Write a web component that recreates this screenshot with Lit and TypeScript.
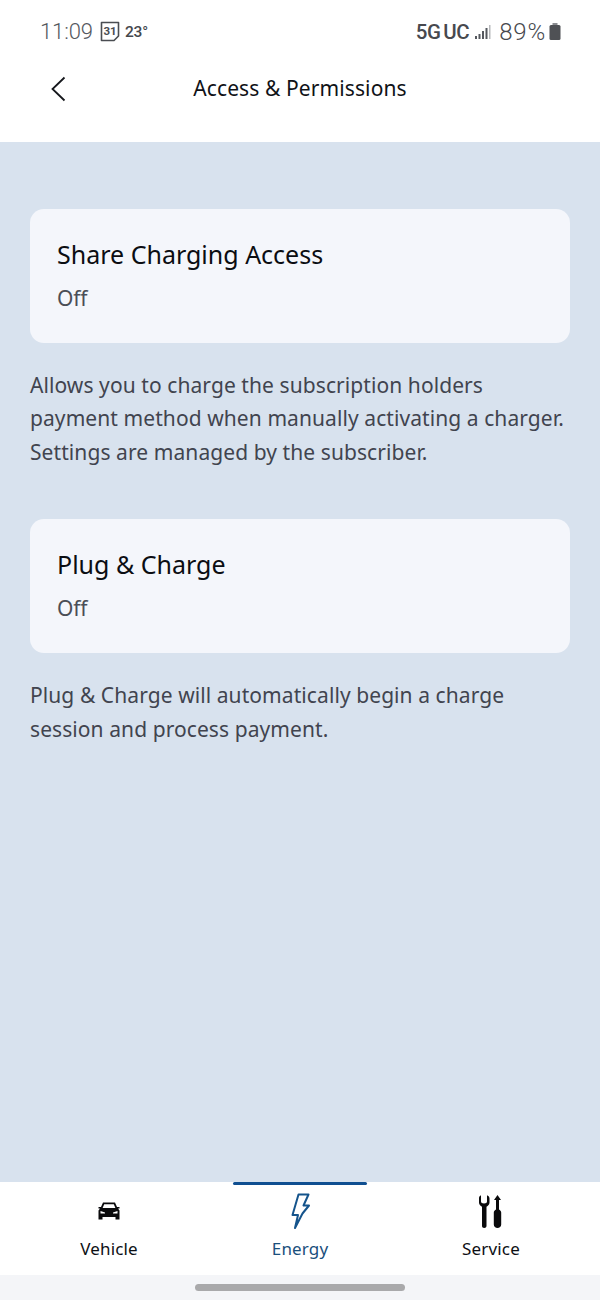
import { LitElement, html, css } from "lit";
import { customElement } from "lit/decorators.js";

@customElement("app-root")
export class AppRoot extends LitElement {
  static styles = css`
    :host { display: flex; flex-direction: column; width: 600px; height: 1300px; overflow: hidden; background: #d8e2ee; font-family: "Noto Sans", sans-serif; color: #00095b; }
    .top { height: 142px; background: #fff; display: flex; flex-direction: column; flex: none; }
    .status { height: 62px; display: flex; align-items: center; justify-content: space-between; padding: 1px 39px 0 40px; color: #50535a; box-sizing: border-box; }
    .status-left, .status-right { display: flex; align-items: center; }
    .time { font: 300 22px/26px "Roboto", sans-serif; letter-spacing: -.1px; color: #55585e; }
    .cal { margin-left: 7px; display: block; }
    .temp { margin-left: 5px; font: 500 15.5px/20px "Roboto", sans-serif; letter-spacing: -.2px; color: #44474c; }
    .net { font: 500 20.5px/24px "Roboto", sans-serif; color: #47494e; letter-spacing: -.4px; word-spacing: -2px; }
    .sig { margin-left: 6px; display: block; }
    .pct { margin-left: 8px; font: 300 24px/28px "Roboto", sans-serif; color: #47494e; letter-spacing: .8px; }
    .bat { margin-left: 3px; display: block; }
    .bar { height: 54px; position: relative; display: flex; align-items: center; justify-content: center; }
    .back { position: absolute; left: 50px; top: 14px; }
    .title { font-size: 21px; line-height: 28px; color: #101217; letter-spacing: .1px; margin-top: -3px; }
    .content { flex: 1; padding: 67px 30px 0; display: flex; flex-direction: column; }
    .card { height: 134px; box-sizing: border-box; background: #f4f6fb; border-radius: 14px; padding: 27px 27px 0; display: flex; flex-direction: column; gap: 12px; }
    .name { font-size: 25px; line-height: 36px; color: #0b0d12; }
    .state { font-size: 21px; line-height: 28px; color: #4b4e56; letter-spacing: -.2px; }
    .desc { margin: 26px 0 50px; font-size: 21px; line-height: 33.4px; color: #41444f; letter-spacing: .08px; white-space: nowrap; }
    .desc.last { margin-bottom: 0; }
    .nav { height: 93px; background: #fff; display: grid; grid-template-columns: 218px 164px 218px; flex: none; }
    .tab { position: relative; display: flex; flex-direction: column; align-items: center; font-size: 17px; line-height: 22px; color: #0d0f14; letter-spacing: .15px; }
    .tab.on { color: #1a4f7c; }
    .tab.on::before { content: ""; position: absolute; top: 0; left: 15px; width: 134px; height: 3px; border-radius: 2px; background: #104f91; }
    .ico { height: 45px; margin-top: 11px; display: flex; align-items: flex-start; justify-content: center; }
    .ico svg { display: block; }
    .car { margin-top: 9px; }
    .tools { margin-top: 2px; }
    .home { height: 25px; background: #f4f5f8; flex: none; display: flex; justify-content: center; padding-top: 9px; box-sizing: border-box; }
    .pill { width: 210px; height: 7px; border-radius: 4px; background: #a9a9ab; }
  `;

  render() {
    return html`
      <div class="top">
        <div class="status">
          <div class="status-left">
            <span class="time">11:09</span>
            <svg class="cal" width="20" height="21" viewBox="0 0 20 21" fill="none">
              <path d="M1.500 1.500H18.500V15L14 19.500H1.500Z" stroke="#4a4d52" stroke-width="1.6" stroke-linejoin="round"/>
              <text x="10" y="14" text-anchor="middle" font-family="Roboto" font-weight="700" font-size="11.500" fill="#4a4d52">31</text>
            </svg>
            <span class="temp">23°</span>
          </div>
          <div class="status-right">
            <span class="net">5G UC</span>
            <svg class="sig" width="16" height="14" viewBox="0 0 16 14">
              <rect x="0" y="11" width="2" height="3" fill="#55585e"/>
              <rect x="3.500" y="9" width="2" height="5" fill="#55585e"/>
              <rect x="7" y="6" width="2" height="8" fill="#55585e"/>
              <rect x="10.500" y="3" width="2" height="11" fill="#55585e"/>
              <rect x="14" y="0" width="1.500" height="14" fill="#b8b9bc"/>
            </svg>
            <span class="pct">89%</span>
            <svg class="bat" width="12" height="17" viewBox="0 0 12 17">
              <rect x="3.500" y="0" width="5" height="3" fill="#8a8c90"/>
              <rect x="0.500" y="2" width="11" height="15" rx="1.500" fill="#4f5155"/>
            </svg>
          </div>
        </div>
        <div class="bar">
          <svg class="back" width="16" height="26" viewBox="0 0 16 26" fill="none">
            <path d="M14.500 1.500 L2.500 13 L14.500 24.500" stroke="#15171c" stroke-width="1.800"/>
          </svg>
          <span class="title">Access &amp; Permissions</span>
        </div>
      </div>
      <div class="content">
        <div class="card"><div class="name">Share Charging Access</div><div class="state">Off</div></div>
        <div class="desc">Allows you to charge the subscription holders<br>payment method when manually activating a charger.<br>Settings are managed by the subscriber.</div>
        <div class="card"><div class="name">Plug &amp; Charge</div><div class="state">Off</div></div>
        <div class="desc last">Plug &amp; Charge will automatically begin a charge<br>session and process payment.</div>
      </div>
      <div class="nav">
        <div class="tab">
          <div class="ico">
            <svg class="car" width="22" height="18" viewBox="0 0 22 18">
              <path fill="#0a0a0c" fill-rule="evenodd" d="M5 0.500H17L19 5H21.500V6.500H20L21.500 8.500V17.500H17.500V15H4.500V17.500H0.500V8.500L2 6.500H0.500V5H3ZM6.200 2.200L4.600 6H17.400L15.800 2.200ZM2.500 9V11.500H7V10.500ZM19.500 9L15 10.500V11.500H19.500Z"/>
            </svg>
          </div>
          <div>Vehicle</div>
        </div>
        <div class="tab on">
          <div class="ico">
            <svg width="19" height="37" viewBox="0 0 19 37" fill="none">
              <path d="M7.500 1.500H17.500L12.500 12.500H18L11.500 20.500L4 35L7 22H1.500Z" stroke="#15548c" stroke-width="2" stroke-linejoin="round"/>
            </svg>
          </div>
          <div>Energy</div>
        </div>
        <div class="tab">
          <div class="ico">
            <svg class="tools" width="26" height="33" viewBox="0 0 26 33">
              <path fill="#0a0a0c" d="M1 3C1 1.500 2 .8 3 .3V6.500C3 7.500 4 8.500 6 8.500S9 7.500 9 6.500V.3C10 .8 11.500 1.500 11.500 3.500V7.500C11.500 9.500 10 11 8.500 11.700V31C8.500 32 7.500 33 6.200 33S4 32 4 31V11.700C2.500 11 1 9.500 1 7.500Z"/>
              <path fill="#0a0a0c" d="M19.500 0L23 5H21V14.500C22 15 23.200 16 23.200 17.500V29.500C23.200 31.500 21.500 33 19.500 33S15.800 31.500 15.800 29.500V17.500C15.800 16 17 15 18 14.500V5H16Z"/>
            </svg>
          </div>
          <div>Service</div>
        </div>
      </div>
      <div class="home"><div class="pill"></div></div>
    `;
  }
}
